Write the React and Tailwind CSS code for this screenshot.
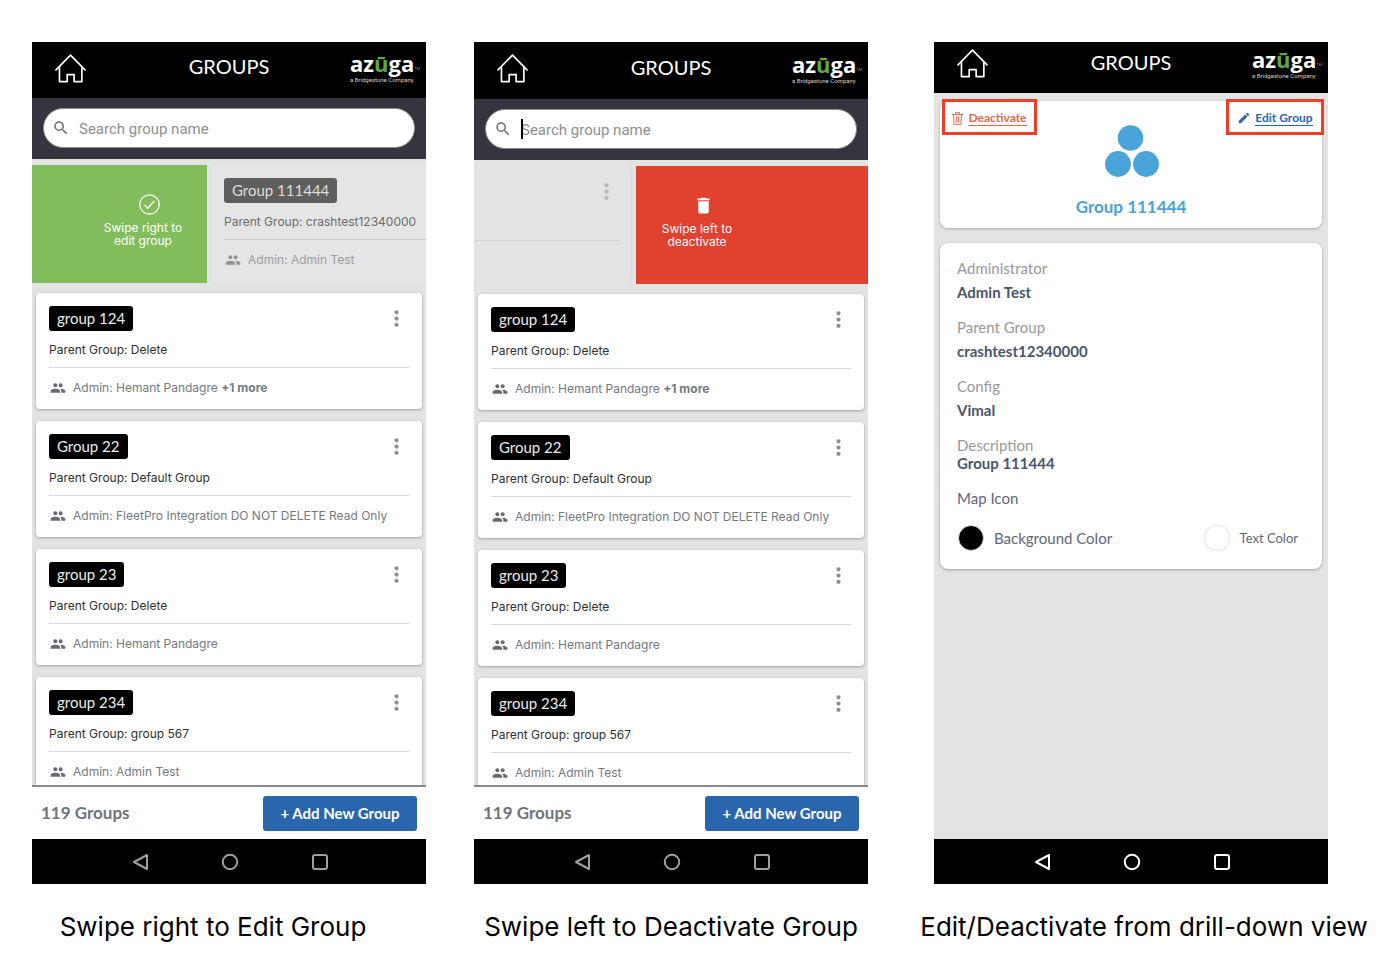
import React from "react";
import { MdSearch, MdPeople, MdMoreVert, MdDelete, MdEdit } from "react-icons/md";

const groups = [
  { name: "group 124", parent: "Delete", admin: "Hemant Pandagre", more: "+1 more" },
  { name: "Group 22", parent: "Default Group", admin: "FleetPro Integration DO NOT DELETE Read Only" },
  { name: "group 23", parent: "Delete", admin: "Hemant Pandagre" },
  { name: "group 234", parent: "group 567", admin: "Admin Test" },
];

const swipedGroup = { name: "Group 111444", parent: "crashtest12340000", admin: "Admin Test" };

function HomeIcon() {
  return (
    <svg viewBox="76 40 94 88" className="h-[29px] w-[31px]" fill="none" stroke="white" strokeWidth="5" strokeLinejoin="round" strokeLinecap="round" aria-hidden="true">
      <path d="M79 88 L123 43.500 L167 88" />
      <path d="M89.500 80 V124 H113 V102.500 H134 V124 H157.500 V80" />
    </svg>
  );
}

function Logo() {
  return (
    <div className="flex flex-col items-start font-['Open_Sans',sans-serif] text-white">
      <div className="flex items-end">
        <span className="text-[22px] leading-5 font-bold">
          az<span className="text-[#5fa845]">ū</span>ga
        </span>
        <span className="text-[4px] leading-[8px] text-[#8f8f8f]">TM</span>
      </div>
      <span className="pt-1 font-['Roboto',sans-serif] text-[6px] leading-[6px] text-[#d0d0d0]">a Bridgestone Company</span>
    </div>
  );
}

function Header({ className }) {
  return (
    <header className={`flex items-center justify-between bg-black pr-1.5 pl-[23px] ${className}`}>
      <button type="button" aria-label="Home" className="flex w-[53px]">
        <HomeIcon />
      </button>
      <h1 className="pb-1 text-[20px] leading-6 text-white">GROUPS</h1>
      <Logo />
    </header>
  );
}

function SearchBar({ id, caret }) {
  return (
    <div className="bg-[#34353f] px-[11px] pt-2.5 pb-[11px]">
      <div className="flex h-10 items-center rounded-full border border-[#8b8b90] bg-white pl-2">
        <label htmlFor={id} aria-label="Search group name" className="flex w-[27px] text-[#6f6f6f]">
          <MdSearch size={18} />
        </label>
        <div className="relative flex flex-1 items-center">
          <input
            id={id}
            type="text"
            placeholder="Search group name"
            className="w-full bg-transparent pt-px font-['Roboto',sans-serif] text-[15px] leading-5 outline-none placeholder:text-[#8e8e8e]"
          />
          {caret && <span className="absolute left-0 h-5 w-0.5 bg-black" />}
        </div>
      </div>
    </div>
  );
}

function GroupCard({ group, muted }) {
  return (
    <article
      className={`rounded p-[13px] ${muted ? "w-[386px] shrink-0 bg-[#e5e5e5] shadow-[0_0_2px_rgba(0,0,0,0.15)]" : "bg-white shadow-[0_1px_3px_rgba(0,0,0,0.3)]"}`}
    >
      <div className="flex h-[25px] items-center justify-between">
        <h2 className={`flex h-[25px] items-center rounded-[3px] px-2 pb-px text-[15px] leading-5 ${muted ? "bg-[#5f5f5f] text-[#dcdcdc]" : "bg-black text-[#ececec]"}`}>
          {group.name}
        </h2>
        <button type="button" aria-label={`Options for ${group.name}`} className={`flex ${muted ? "text-[#b8b8b8]" : "text-[#8f8f8f]"}`}>
          <MdMoreVert size={25} />
        </button>
      </div>
      <p className={`mt-[11px] font-['Inter',sans-serif] text-[12px] leading-4 ${muted ? "text-[#6c6c6c]" : "text-[#2f2f2f]"}`}>Parent Group: {group.parent}</p>
      <div className={`mt-[9px] flex items-center gap-[7px] border-t pt-3 pl-px font-['Inter',sans-serif] text-[12px] leading-4 whitespace-nowrap ${muted ? "border-[#cdcdcd] text-[#9c9ea1]" : "border-[#d8d8d8] text-[#747982]"}`}>
        <MdPeople size={16} className={muted ? "text-[#919396]" : "text-[#656a72]"} />
        <span>
          Admin: {group.admin} {group.more && <b className="font-bold">{group.more}</b>}
        </span>
      </div>
    </article>
  );
}

function SwipeRight() {
  return (
    <div className="flex h-[118px] gap-1 overflow-hidden">
      <button type="button" className="flex w-[175px] shrink-0 flex-col items-center gap-1.5 bg-[#82bd5b] pt-[29px] pl-[47px] font-['Inter',sans-serif] text-[12px] leading-[13px] text-white">
        <svg viewBox="0 0 21 21" className="ml-3 size-[21px]" fill="none" stroke="white" strokeWidth="1.300" aria-hidden="true">
          <circle cx="10.500" cy="10.500" r="9.700" />
          <path d="M5.500 11 L8.600 14.200 L15.500 6.800" />
        </svg>
        <span>Swipe right to<br />edit group</span>
      </button>
      <GroupCard group={swipedGroup} muted />
    </div>
  );
}

function SwipeLeft() {
  return (
    <div className="flex h-[118px] justify-end gap-[5px] overflow-hidden">
      <article className="flex min-w-0 flex-1 flex-col rounded bg-[#e3e3e3] py-[13px] pr-3 shadow-[0_0_2px_rgba(0,0,0,0.15)]">
        <div className="flex h-[25px] justify-end">
          <button type="button" aria-label="Options for Group 111444" className="flex text-[#b8b8b8]">
            <MdMoreVert size={25} />
          </button>
        </div>
        <hr className="mt-9 border-[#d4d4d4]" />
      </article>
      <button type="button" className="flex w-[232px] shrink-0 flex-col items-center gap-1.5 bg-[#e1412f] pt-[29px] pr-[110px] font-['Inter',sans-serif] text-[12px] leading-[13px] text-white">
        <MdDelete size={21} className="ml-3" />
        <span>Swipe left to<br />deactivate</span>
      </button>
    </div>
  );
}

function AndroidNav({ className }) {
  return (
    <nav className={`flex h-[45px] items-center justify-center bg-black pl-0.5 ${className}`}>
      <button type="button" aria-label="Back" className="flex w-[90px] justify-center">
        <svg viewBox="0 0 18 18" className="size-[18px]" fill="none" stroke="currentColor" strokeWidth="2" strokeLinejoin="round" aria-hidden="true">
          <path d="M16 2 V16 L3 9 Z" />
        </svg>
      </button>
      <button type="button" aria-label="Home screen" className="flex w-[90px] justify-center">
        <svg viewBox="0 0 18 18" className="size-[18px]" fill="none" stroke="currentColor" strokeWidth="2" aria-hidden="true">
          <circle cx="9" cy="9" r="7.200" />
        </svg>
      </button>
      <button type="button" aria-label="Recent apps" className="flex w-[90px] justify-center">
        <svg viewBox="0 0 18 18" className="size-[18px]" fill="none" stroke="currentColor" strokeWidth="2" aria-hidden="true">
          <rect x="2" y="2" width="14" height="14" rx="2" />
        </svg>
      </button>
    </nav>
  );
}

function ListScreen({ id, headerClass, caret, children }) {
  return (
    <div className="flex flex-1 flex-col overflow-hidden bg-[#e3e3e3]">
      <Header className={headerClass} />
      <SearchBar id={id} caret={caret} />
      <main className="h-[625px] flex-1 basis-[625px] overflow-hidden pt-1.5">
        {children}
        <div className="mt-2.5 flex flex-col gap-[12px] px-1">
          {groups.map((g) => (
            <GroupCard key={g.name} group={g} />
          ))}
        </div>
      </main>
      <footer className="flex h-[54px] items-center justify-between border-t-2 border-[#8a8a8a] bg-white px-[9px]">
        <p className="text-[17px] leading-5 font-bold text-[#6f747a]">119 Groups</p>
        <button type="button" className="h-[35px] w-[154px] rounded-[3px] bg-[#2a66ae] text-[15px] leading-5 font-bold text-white">
          + Add New Group
        </button>
      </footer>
      <AndroidNav className="text-[#a0a0a0]" />
    </div>
  );
}

function Detail({ label, value, valueClass }) {
  return (
    <div>
      <dt className="text-[#999999]">{label}</dt>
      <dd className={`font-bold text-[#4a566a] ${valueClass}`}>{value}</dd>
    </div>
  );
}

function DetailScreen() {
  return (
    <div className="flex flex-1 flex-col overflow-hidden bg-[#e3e3e3]">
      <Header className="h-[51px] pb-2" />
      <main className="flex flex-1 flex-col gap-[15px] px-1.5 pt-2">
        <section className="rounded-lg bg-white pb-[11px] shadow-[0_1px_3px_rgba(0,0,0,0.25)]">
          <div className="-mt-0.5 -mr-0.5 flex items-start justify-between pl-0.5">
            <a href="#deactivate" className="flex h-9 w-[95px] items-center justify-center gap-[5px] border-3 border-[#ee3f25] pt-0.5 text-[12px] leading-[14px] font-bold text-[#e2694f]">
              <svg viewBox="0 0 11 13" className="h-[13px] w-[11px]" fill="none" stroke="currentColor" strokeWidth="1" aria-hidden="true">
                <path d="M0 2.500 H11 M3.500 2.500 V0.600 H7.500 V2.500 M1.500 2.500 L2 12.300 H9 L9.500 2.500 M4.400 4.500 V10.500 M6.600 4.500 V10.500" />
              </svg>
              <span className="border-b border-current">Deactivate</span>
            </a>
            <svg viewBox="0 0 54 52" className="mt-[26px] h-[52px] w-[54px]" fill="#4aa4da" aria-hidden="true">
              <circle cx="25.500" cy="13" r="12.800" />
              <circle cx="13" cy="39" r="12.900" />
              <circle cx="41" cy="39" r="12.900" />
            </svg>
            <a href="#edit" className="flex h-9 w-[98px] items-center justify-center gap-1 border-3 border-[#ee3f25] pt-0.5 text-[12px] leading-[14px] font-bold text-[#2a66ae]">
              <MdEdit size={14} />
              <span className="border-b border-current">Edit Group</span>
            </a>
          </div>
          <h2 className="mt-5 text-center text-[17px] leading-5 font-bold text-[#47a3d9]">Group 111444</h2>
        </section>
        <section className="rounded-lg bg-white px-[17px] pt-4 pb-[18px] text-[15px] leading-[18px] shadow-[0_1px_3px_rgba(0,0,0,0.3)]">
          <dl className="flex flex-col gap-[17px]">
            <Detail label="Administrator" value="Admin Test" valueClass="mt-1.5" />
            <Detail label="Parent Group" value="crashtest12340000" valueClass="mt-1.5" />
            <Detail label="Config" value="Vimal" valueClass="mt-1.5" />
            <Detail label="Description" value="Group 111444" valueClass="" />
          </dl>
          <h3 className="mt-[17px] text-[#5d6778]">Map Icon</h3>
          <div className="mt-[18px] flex items-center justify-between pr-[7px] text-[#5d6778]">
            <div className="flex items-center gap-2.5 pl-px">
              <span className="size-[26px] rounded-full border border-[#e0e0e0] bg-black" />
              <span>Background Color</span>
            </div>
            <div className="flex items-center gap-2.5">
              <span className="size-[26px] rounded-full border border-[#efefef] bg-white shadow-[0_0_1px_rgba(0,0,0,0.15)]" />
              <span className="text-[13px]">Text Color</span>
            </div>
          </div>
        </section>
      </main>
      <AndroidNav className="text-white" />
    </div>
  );
}

export default function App() {
  return (
    <div className="flex min-h-screen items-start bg-white pt-[42px] pr-[68px] pl-8 font-['Lato',sans-serif]">
      <div className="flex min-w-0 flex-1 items-stretch gap-12">
        <figure className="flex min-w-0 flex-1 flex-col">
          <ListScreen id="search-edit" headerClass="h-14 pb-1">
            <SwipeRight />
          </ListScreen>
          <figcaption className="mt-6 pr-8 text-center font-['Inter',sans-serif] text-[26px] leading-[38px] whitespace-nowrap text-black">Swipe right to Edit Group</figcaption>
        </figure>
        <figure className="flex min-w-0 flex-1 flex-col">
          <ListScreen id="search-deactivate" headerClass="h-[57px] pb-1" caret>
            <SwipeLeft />
          </ListScreen>
          <figcaption className="mt-6 text-center font-['Inter',sans-serif] text-[26px] leading-[38px] whitespace-nowrap text-black">Swipe left to Deactivate Group</figcaption>
        </figure>
        <figure className="ml-[18px] flex min-w-0 flex-1 flex-col">
          <DetailScreen />
          <figcaption className="mt-6 -mr-[43px] -ml-[17px] text-center font-['Inter',sans-serif] text-[26px] leading-[38px] whitespace-nowrap text-black">Edit/Deactivate from drill-down view</figcaption>
        </figure>
      </div>
    </div>
  );
}
